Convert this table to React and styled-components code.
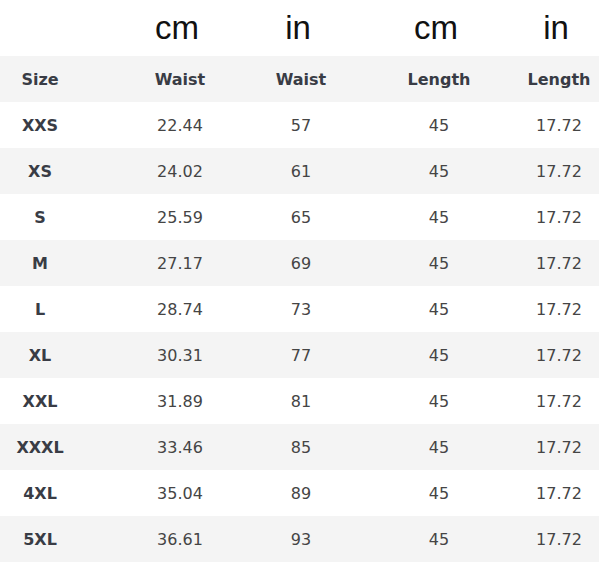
import styled, { createGlobalStyle } from 'styled-components';

const GlobalStyle = createGlobalStyle`
  html, body {
    margin: 0;
    padding: 0;
    background: #ffffff;
  }
`;

// each column keeps its text centred 40px in from its right edge
const columns = '80px 140px 121px 138px 120px';

const units = ['cm', 'in', 'cm', 'in'];
const headers = ['Size', 'Waist', 'Waist', 'Length', 'Length'];

const rows = [
  ['XXS', '22.44', '57', '45', '17.72'],
  ['XS', '24.02', '61', '45', '17.72'],
  ['S', '25.59', '65', '45', '17.72'],
  ['M', '27.17', '69', '45', '17.72'],
  ['L', '28.74', '73', '45', '17.72'],
  ['XL', '30.31', '77', '45', '17.72'],
  ['XXL', '31.89', '81', '45', '17.72'],
  ['XXXL', '33.46', '85', '45', '17.72'],
  ['4XL', '35.04', '89', '45', '17.72'],
  ['5XL', '36.61', '93', '45', '17.72'],
];

const App = () => (
  <>
    <GlobalStyle />
    <Chart>
      <UnitRow>
        <span />
        {units.map((u, i) => (
          <Unit key={i}>{u}</Unit>
        ))}
      </UnitRow>
      <Row $shaded>
        {headers.map((h, i) => (
          <Cell key={i} $bold>{h}</Cell>
        ))}
      </Row>
      {rows.map((r, i) => (
        <Row key={r[0]} $shaded={i % 2 === 1}>
          {r.map((v, j) => (
            <Cell key={j} $bold={j === 0}>{v}</Cell>
          ))}
        </Row>
      ))}
    </Chart>
  </>
);

const Chart = styled.div`
  width: 599px;
  display: flex;
  flex-direction: column;
`;

const UnitRow = styled.div`
  display: grid;
  grid-template-columns: ${columns};
  justify-items: end;
  height: 56px;
  align-items: center;
`;

const Unit = styled.div`
  width: 84px;
  text-align: center;
  font-family: "Liberation Sans", Arial, sans-serif;
  font-size: 33px;
  line-height: 56px;
  color: #111;
  padding-right: 1px;
`;

const Row = styled.div`
  display: grid;
  grid-template-columns: ${columns};
  justify-items: end;
  align-items: center;
  height: 46px;
  background: ${p => (p.$shaded ? '#f4f4f4' : '#ffffff')};
`;

const Cell = styled.div`
  width: 80px;
  text-align: center;
  font-family: "DejaVu Sans", Verdana, sans-serif;
  font-size: 16px;
  font-weight: ${p => (p.$bold ? 700 : 400)};
  color: ${p => (p.$bold ? '#393c45' : '#454545')};
  white-space: nowrap;
`;

export default App;
